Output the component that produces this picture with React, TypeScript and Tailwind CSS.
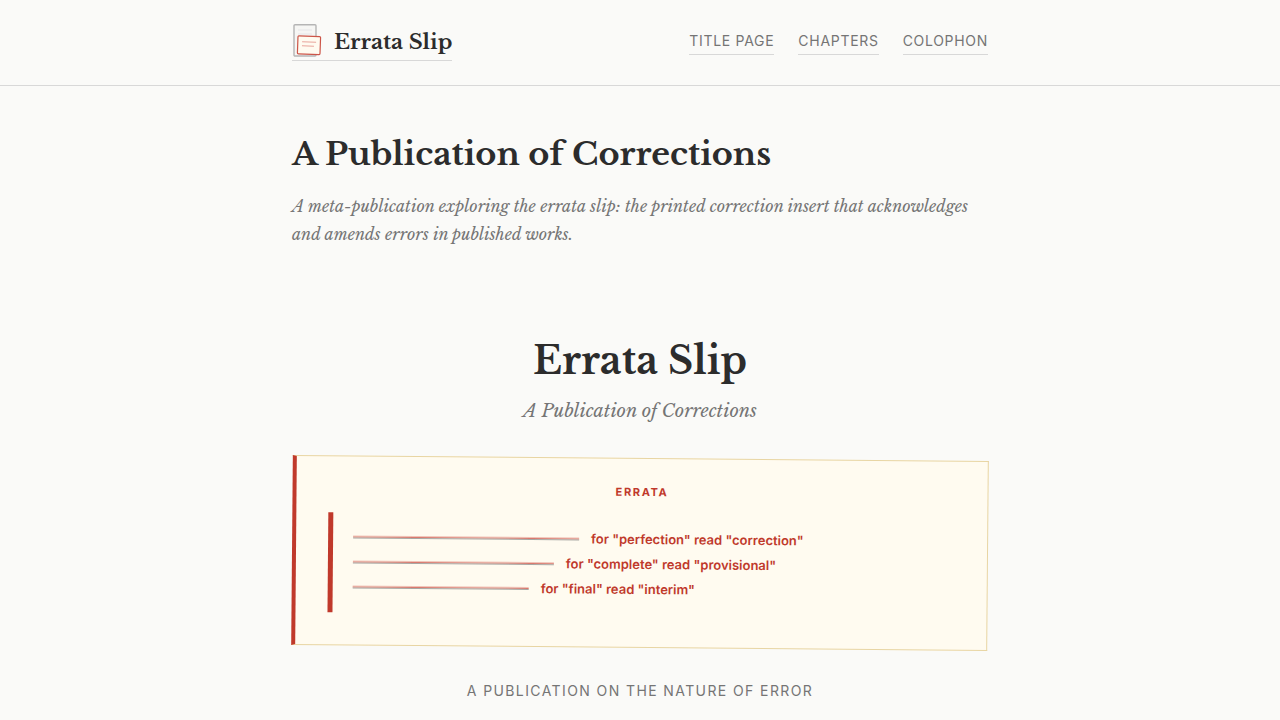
interface Correction {
  wrong: string;
  right: string;
  rule: string;
}

const corrections: Correction[] = [
  { wrong: "perfection", right: "correction", rule: "w-[226px]" },
  { wrong: "complete", right: "provisional", rule: "w-[201px]" },
  { wrong: "final", right: "interim", rule: "w-[176px]" },
];

const navLinks = [
  { label: "Title Page", href: "#title-page" },
  { label: "Chapters", href: "#chapters" },
  { label: "Colophon", href: "#colophon" },
];

const serif = "font-['Libre_Baskerville','Liberation_Serif',serif]";
const sans = "font-[Inter,'Liberation_Sans',sans-serif]";

function Logo() {
  return (
    <svg width="32" height="36" viewBox="0 0 32 36" fill="none" aria-hidden="true">
      <rect x="2" y="0.7" width="22" height="31.3" rx="1" fill="#f6f6f4" stroke="#b5b5b5" strokeWidth="1.4" />
      <path d="M6 6h14M6 10h14" stroke="#ebebeb" strokeWidth="1.6" />
      <g transform="rotate(2 17 21)">
        <rect x="5.7" y="12.2" width="22.6" height="18" rx="1" fill="#fffbf0" stroke="#cc5548" strokeWidth="1.2" />
        <path d="M10 18h14M10 22h12" stroke="#e8a59b" strokeWidth="1" />
      </g>
    </svg>
  );
}

function Header() {
  return (
    <header className="border-b border-[#d8d8d8] py-6">
      <div className="mx-auto flex max-w-[744px] items-start justify-between px-6">
        <a href="/" className="flex items-center gap-[10px] border-b border-[#d8d8d8]">
          <Logo />
          <span className={`${serif} text-[21px] leading-9 font-bold text-[#2c2c2c]`}>Errata Slip</span>
        </a>
        <nav className={`${sans} flex gap-6 pt-1 text-sm leading-[26px] tracking-wider text-[#757575] uppercase`}>
          {navLinks.map((link) => (
            <a key={link.href} href={link.href} className="border-b border-[#d8d8d8]">
              {link.label}
            </a>
          ))}
        </nav>
      </div>
    </header>
  );
}

function ErrataInsert() {
  return (
    <div className={`${sans} rotate-[0.5deg] border border-l-4 border-[#e8d5a3] border-l-[#c0392b] bg-[#fffbf0] p-8 pt-6 text-[#c0392b]`}>
      <h3 className="text-center text-[11px] leading-[18px] font-bold tracking-[0.15em] uppercase">Errata</h3>
      <ul className="mt-[14px] flex flex-col border-l-5 border-[#c0392b] pt-3 pb-[13px] pl-5">
        {corrections.map((c) => (
          <li key={c.wrong} className="flex items-center gap-3">
            <span className={c.rule}>
              <span className="block h-px bg-[#f0c4b8]" />
              <span className="block h-px bg-[#d9796e]" />
              <span className="block h-px bg-[#a8a8a4]" />
            </span>
            <span className="text-[13px] leading-[25px] font-semibold">
              for "{c.wrong}" read "{c.right}"
            </span>
          </li>
        ))}
      </ul>
    </div>
  );
}

export default function App() {
  return (
    <div className="min-h-screen bg-[#fafaf8] text-[#2c2c2c]">
      <Header />
      <main className={`${serif} mx-auto max-w-[744px] px-6 py-12`}>
        <h1 className="text-[32px] leading-10 font-bold">A Publication of Corrections</h1>
        <p className="mt-[18px] text-base leading-7 text-[#757575] italic">
          A meta-publication exploring the errata slip: the printed correction insert that acknowledges and amends
          errors in published works.
        </p>

        <section id="title-page" className="mt-[88px] text-center">
          <h2 className="text-[38px] leading-[50px] font-bold">Errata Slip</h2>
          <p className="mt-[10px] mb-8 text-lg leading-[30px] text-[#757575] italic">A Publication of Corrections</p>
          <ErrataInsert />
          <p className={`${sans} mt-8 text-sm leading-[22px] tracking-widest text-[#757575] uppercase`}>
            A publication on the nature of error
          </p>
        </section>
      </main>
    </div>
  );
}
